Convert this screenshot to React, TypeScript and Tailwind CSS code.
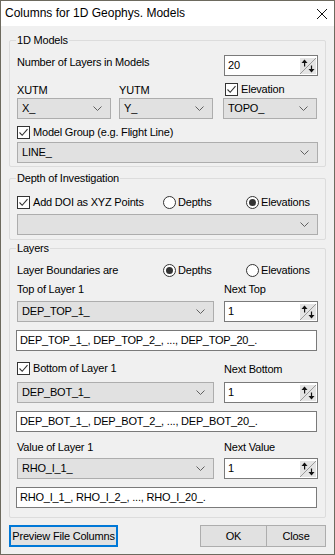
import React from "react";

const font = { fontFamily: '"Liberation Sans", Arial, sans-serif' };

function Check({ label, className = "" }: { label: string; className?: string }) {
  return (
    <div className={`flex items-center h-[15px] ${className}`}>
      <div className="w-[13px] h-[13px] border border-[#333] bg-white flex items-center justify-center">
        <svg width="11" height="11" viewBox="0 0 11 11">
          <path d="M1.5 5.5 L4.2 8.3 L9.5 2.2" fill="none" stroke="#333" strokeWidth="1.1" />
        </svg>
      </div>
      <span className="ml-[3px]">{label}</span>
    </div>
  );
}

function Radio({ label, on, className = "" }: { label: string; on?: boolean; className?: string }) {
  return (
    <div className={`flex items-center h-[15px] ${className}`}>
      <div className="w-[13px] h-[13px] rounded-full border border-[#333] bg-white flex items-center justify-center">
        {on ? <div className="w-[7px] h-[7px] rounded-full bg-[#333]" /> : null}
      </div>
      <span className="ml-[2px]">{label}</span>
    </div>
  );
}

function Combo({ value, w }: { value: string; w: string }) {
  return (
    <div className={`${w} h-[21px] border border-[#adadad] bg-[#e1e1e1] flex items-center justify-between pl-[4px] pr-[8px]`}>
      <span>{value}</span>
      <svg width="9" height="5" viewBox="0 0 9 5">
        <path d="M0.5 0.5 L4.5 4.5 L8.5 0.5" fill="none" stroke="#606060" strokeWidth="1" />
      </svg>
    </div>
  );
}

function Spin({ value }: { value: string }) {
  return (
    <div className="w-[94px] h-[21px] border border-[#7a7a7a] bg-white flex items-center justify-between pl-[3px] pr-[1px]">
      <span>{value}</span>
      <svg width="16" height="16" viewBox="0 0 16 16">
        <rect x="0" y="0" width="16" height="16" fill="#e4e4e4" />
        <path d="M0 16 L16 0" stroke="#9a9a9a" strokeWidth="1" />
        <path d="M4.5 1.5 L7.5 5 L1.5 5 Z" fill="#111" />
        <rect x="4" y="4.5" width="1.2" height="4" fill="#111" />
        <path d="M11.5 14.5 L8.5 11 L14.5 11 Z" fill="#111" />
        <rect x="10.9" y="7.5" width="1.2" height="4" fill="#111" />
      </svg>
    </div>
  );
}

function Field({ value }: { value: string }) {
  return (
    <div className="w-[301px] h-[21px] border border-[#7a7a7a] bg-white flex items-center pl-[3px] -ml-[1px]">
      {value}
    </div>
  );
}

function Group({ title, className = "", children }: { title: string; className?: string; children: React.ReactNode }) {
  return (
    <div className={`relative mx-[8px] border border-[#dcdcdc] rounded-[2px] pl-[7px] pr-[7px] ${className}`}>
      <span className="absolute -top-[8px] left-[6px] px-[1px] bg-[#f0f0f0] leading-[15px]">{title}</span>
      {children}
    </div>
  );
}

export default function App() {
  return (
    <div
      className="w-[335px] h-[555px] border border-[#6d6a5e] bg-[#f0f0f0] text-[11px] tracking-[-0.2px] text-black leading-[15px] flex flex-col"
      style={font}
    >
      <div className="h-[25px] bg-white flex items-center justify-between pl-[4px] pr-[6px] shrink-0">
        <span className="text-[12px] tracking-normal">Columns for 1D Geophys. Models</span>
        <svg width="12" height="12" viewBox="0 0 12 12">
          <path d="M1 1 L11 11 M11 1 L1 11" stroke="#111" strokeWidth="1" />
        </svg>
      </div>

      <Group title="1D Models" className="mt-[14px] pt-[14px] pb-[3px]">
        <div className="flex justify-between items-start">
          <span>Number of Layers in Models</span>
          <Spin value="20" />
        </div>
        <div className="flex mt-[7px]">
          <div className="flex flex-col w-[94px]">
            <span className="h-[15px]">XUTM</span>
            <Combo value="X_" w="w-[94px]" />
          </div>
          <div className="flex flex-col w-[94px] ml-[8px]">
            <span className="h-[15px]">YUTM</span>
            <Combo value="Y_" w="w-[94px]" />
          </div>
          <div className="flex flex-col w-[94px] ml-[10px]">
            <Check label="Elevation" className="ml-[2px] -mt-[1px] mb-[1px]" />
            <Combo value="TOPO_" w="w-[94px]" />
          </div>
        </div>
        <Check label="Model Group (e.g. Flight Line)" className="mt-[6px]" />
        <div className="mt-[2px]">
          <Combo value="LINE_" w="w-[301px]" />
        </div>
      </Group>

      <Group title="Depth of Investigation" className="mt-[11px] pt-[16px] pb-[4px]">
        <div className="flex items-center">
          <Check label="Add DOI as XYZ Points" className="w-[146px]" />
          <Radio label="Depths" className="w-[83px]" />
          <Radio label="Elevations" on />
        </div>
        <div className="mt-[4px]">
          <Combo value="" w="w-[301px]" />
        </div>
      </Group>

      <Group title="Layers" className="mt-[8px] pt-[14px] pb-[9px]">
        <div className="flex items-center">
          <span className="w-[146px]">Layer Boundaries are</span>
          <Radio label="Depths" on className="w-[83px]" />
          <Radio label="Elevations" />
        </div>
        <div className="flex justify-between mt-[4px]">
          <span>Top of Layer 1</span>
          <span className="w-[94px]">Next Top</span>
        </div>
        <div className="flex justify-between mt-[4px]">
          <Combo value="DEP_TOP_1_" w="w-[197px]" />
          <Spin value="1" />
        </div>
        <div className="mt-[8px]">
          <Field value="DEP_TOP_1_, DEP_TOP_2_, ..., DEP_TOP_20_." />
        </div>
        <div className="flex justify-between items-center mt-[9px]">
          <Check label="Bottom of Layer 1" />
          <span className="w-[94px] mt-[2px]">Next Bottom</span>
        </div>
        <div className="flex justify-between mt-[5px]">
          <Combo value="DEP_BOT_1_" w="w-[197px]" />
          <Spin value="1" />
        </div>
        <div className="mt-[8px]">
          <Field value="DEP_BOT_1_, DEP_BOT_2_, ..., DEP_BOT_20_." />
        </div>
        <div className="flex justify-between mt-[8px]">
          <span>Value of Layer 1</span>
          <span className="w-[94px]">Next Value</span>
        </div>
        <div className="flex justify-between mt-[3px]">
          <Combo value="RHO_I_1_" w="w-[197px]" />
          <Spin value="1" />
        </div>
        <div className="mt-[8px]">
          <Field value="RHO_I_1_, RHO_I_2_, ..., RHO_I_20_." />
        </div>
      </Group>

      <div className="flex mt-[7px] mx-[8px]">
        <button className="w-[109px] h-[22px] border-2 border-[#0078d7] bg-[#e1e1e1] flex items-center justify-center tracking-[-0.2px]">
          Preview File Columns
        </button>
        <button className="ml-auto w-[67px] h-[22px] border border-[#adadad] bg-[#e1e1e1] flex items-center justify-center">
          OK
        </button>
        <button className="ml-[-1px] w-[60px] h-[22px] border border-[#adadad] bg-[#e1e1e1] flex items-center justify-center">
          Close
        </button>
      </div>
    </div>
  );
}
